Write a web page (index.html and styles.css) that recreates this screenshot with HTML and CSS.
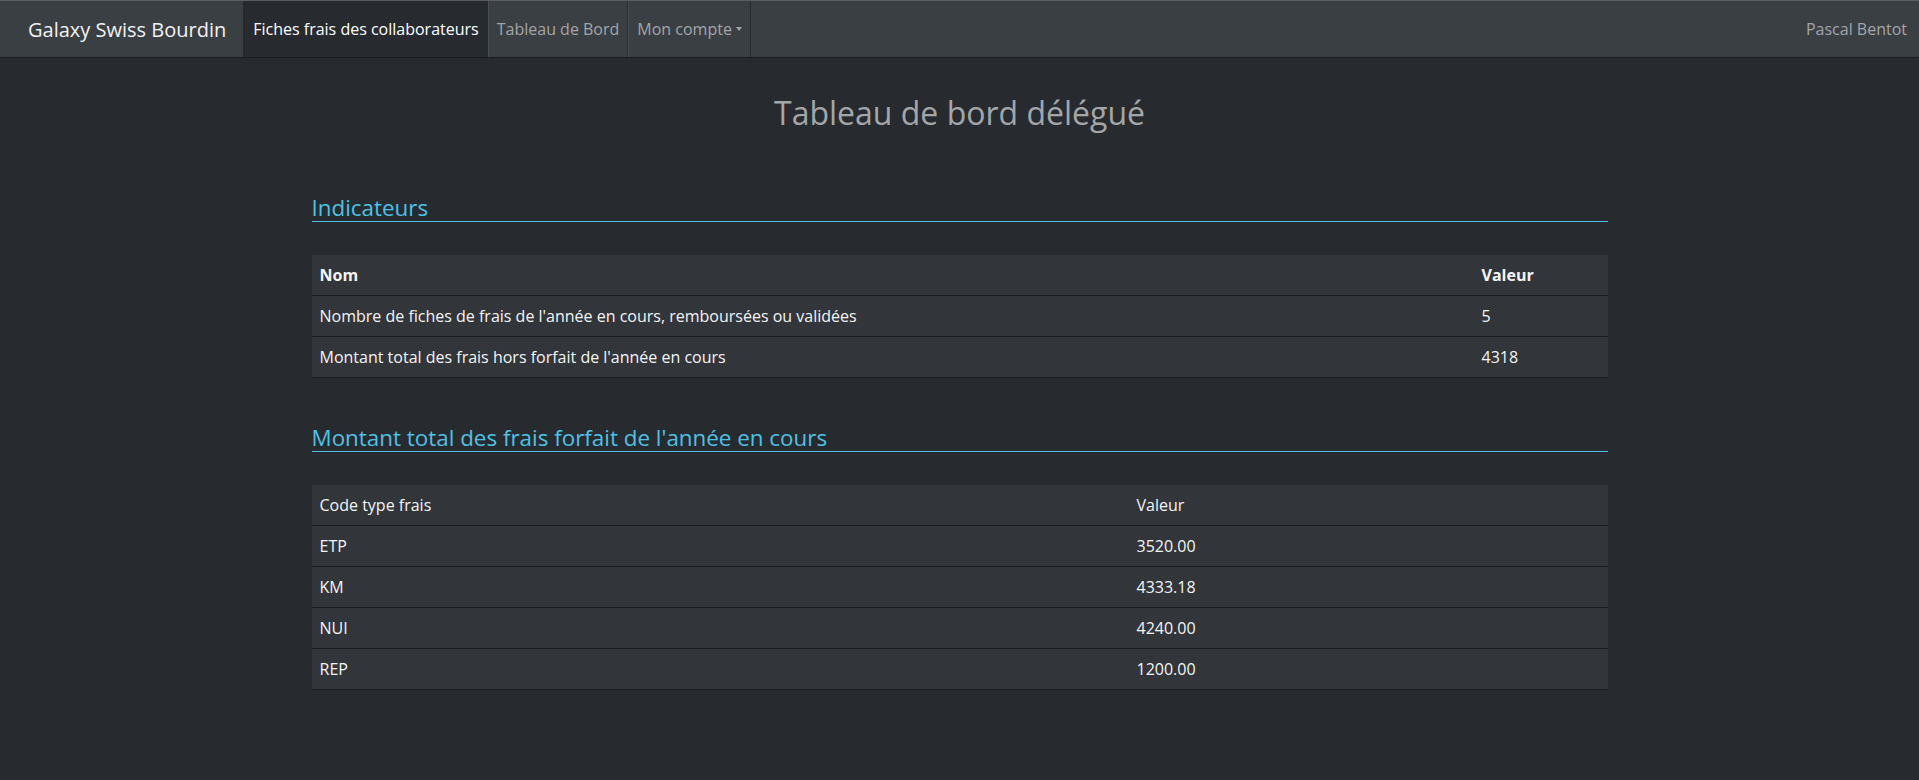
FILE: index.html
```html
<!DOCTYPE html>
<html lang="fr">
<head>
<meta charset="utf-8">
<title>Tableau de bord délégué</title>
<link rel="stylesheet" href="styles.css">
</head>
<body>
<nav class="navbar">
  <a class="brand" href="#">Galaxy Swiss Bourdin</a>
  <ul class="nav">
    <li><a class="nav-link active" href="#">Fiches frais des collaborateurs</a></li>
    <li><a class="nav-link" href="#">Tableau de Bord</a></li>
    <li><a class="nav-link" href="#">Mon compte <span class="caret"></span></a></li>
  </ul>
  <div class="nav-right"><a class="user" href="#">Pascal Bentot</a></div>
</nav>
<main class="container">
  <h1 class="page-title">Tableau de bord délégué</h1>

  <h2 class="section-title">Indicateurs</h2>
  <table class="data-table">
    <thead>
      <tr><th class="col-name-1">Nom</th><th>Valeur</th></tr>
    </thead>
    <tbody>
      <tr><td>Nombre de fiches de frais de l'année en cours, remboursées ou validées</td><td>5</td></tr>
      <tr><td>Montant total des frais hors forfait de l'année en cours</td><td>4318</td></tr>
    </tbody>
  </table>

  <h2 class="section-title second">Montant total des frais forfait de l'année en cours</h2>
  <table class="data-table plain-head">
    <thead>
      <tr><th class="col-name-2">Code type frais</th><th>Valeur</th></tr>
    </thead>
    <tbody>
      <tr><td>ETP</td><td>3520.00</td></tr>
      <tr><td>KM</td><td>4333.18</td></tr>
      <tr><td>NUI</td><td>4240.00</td></tr>
      <tr><td>REP</td><td>1200.00</td></tr>
    </tbody>
  </table>
</main>
</body>
</html>
```

FILE: styles.css
```css
* { box-sizing: border-box; }

html, body {
  margin: 0;
  padding: 0;
}

body {
  background: #272b30;
  color: #c8c8c8;
  font-family: "Open Sans", "Liberation Sans", sans-serif;
  font-size: 16px;
  min-height: 780px;
}

a { text-decoration: none; }

.navbar {
  display: flex;
  align-items: stretch;
  height: 58px;
  background: #3a3f44;
  border-top: 1px solid #5a5e62;
  border-bottom: 1px solid #1c1e22;
}

.brand {
  display: flex;
  align-items: center;
  padding: 0 17px 0 28px;
  font-size: 20px;
  color: #f2f2f2;
  border-right: 1px solid #26292d;
}

.nav {
  display: flex;
  list-style: none;
  margin: 0;
  padding: 0;
}

.nav li { display: flex; }

.nav-link {
  display: flex;
  align-items: center;
  padding: 0 8px;
  color: #a3a5a7;
  font-size: 16px;
  border-left: 1px solid #4a4f54;
  border-right: 1px solid #26292d;
}

.nav-link.active {
  background: #272b30;
  color: #ffffff;
  border-left-color: #26292d;
}

.caret {
  display: inline-block;
  width: 0;
  height: 0;
  margin-left: 4px;
  border-top: 4px solid #a3a5a7;
  border-left: 3px solid transparent;
  border-right: 3px solid transparent;
  vertical-align: middle;
}

.nav-right {
  margin-left: auto;
  display: flex;
  align-items: center;
  padding-right: 12px;
}

.user {
  color: #a3a5a7;
  font-size: 16px;
}

.container {
  width: 1296px;
  margin: 0 auto;
  padding-bottom: 60px;
}

.page-title {
  margin: 37px 0 0;
  text-align: center;
  font-size: 32px;
  font-weight: 400;
  line-height: 36px;
  color: #a4a6a8;
}

.section-title {
  margin: 64px 0 0;
  padding-bottom: 0;
  font-size: 22.4px;
  font-weight: 400;
  line-height: 26px;
  color: #4fc1e3;
  border-bottom: 1px solid #4fc1e3;
}

.section-title.second {
  margin-top: 47px;
}

.data-table {
  width: 100%;
  margin-top: 33px;
  border-collapse: collapse;
  background: #32363b;
  color: #f4f4f4;
  font-size: 16px;
}

.data-table th,
.data-table td {
  text-align: left;
  padding: 8px;
  height: 40.7px;
  line-height: 24px;
  border-bottom: 1px solid #1c1e22;
}

.data-table th { font-weight: 700; }

.plain-head th { font-weight: 400; }

.col-name-1 { width: 1162px; }
.col-name-2 { width: 817px; }
```
